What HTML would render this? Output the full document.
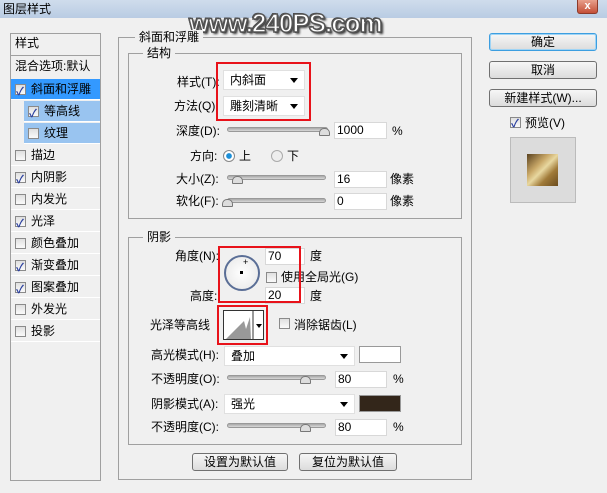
<!DOCTYPE html>
<html><head><meta charset="utf-8"><style>
*{box-sizing:border-box;margin:0;padding:0}
body{width:607px;height:493px;background:#f0f0f0;font-family:"Liberation Sans","Noto Sans CJK SC",sans-serif;font-size:12px;color:#000;position:relative;overflow:hidden}
.a{position:absolute;white-space:nowrap;line-height:14px}
.title{position:absolute;left:0;top:0;width:607px;height:18px;background:linear-gradient(#cfdcec,#b9cce3);}
.close{position:absolute;left:577px;top:0;width:21px;height:14px;background:linear-gradient(#e8a08c,#c44f37);border:1px solid #8c3a2a;border-top:none;border-radius:0 0 3px 3px;color:#fff;font-weight:bold;font-size:11px;text-align:center;line-height:12px}
.box{position:absolute;border:1px solid #a0a0a0}
.leg{position:absolute;background:#f0f0f0;padding:0 4px;line-height:14px}
.row{position:absolute;left:11px;width:89px;height:21px;border-bottom:1px solid #fff;line-height:20px;padding-left:20px;white-space:nowrap;overflow:hidden}
.cb{position:absolute;width:11px;height:11px;border:1px solid #8a8a8a;background:linear-gradient(#e0e0e0,#fafafa)}
.cb.on::after{content:"✓";position:absolute;left:0;top:-3px;font-size:11px;color:#2a3f9e;font-weight:bold}
.inp{position:absolute;background:#fff;border:1px solid #d8d8d8;height:17px;line-height:15px;padding-left:2px}
.dd{position:absolute;background:#fff;border:1px solid #e0e0e0;height:20px;line-height:18px;padding-left:6px}
.dd::after{content:"";position:absolute;right:6px;top:7px;border:4px solid transparent;border-top:5px solid #000}
.sl{position:absolute;height:5px;border-radius:3px;background:linear-gradient(#a8a8a8,#d8d8d8);border:1px solid #999}
.th{position:absolute;width:11px;height:8px;background:#ddd;border:1px solid #777;border-radius:5px 5px 1px 1px}
.btn{position:absolute;border:1px solid #707070;border-radius:3px;background:linear-gradient(#f6f6f6,#dcdcdc);text-align:center;line-height:16px;height:18px}
.red{position:absolute;border:2px solid #e8121a}
</style></head><body>
<div class="title"></div>
<div class="a" style="left:3px;top:2px">图层样式</div>
<div class="close">x</div>
<div class="a" style="left:189px;top:9px;font:bold 26px 'Liberation Sans',sans-serif;letter-spacing:-1px;line-height:28px;color:#fff;-webkit-text-stroke:1.5px #555;text-shadow:1px 1px 0 #444,-1px -1px 0 #444,2px 2px 2px #333">www.240PS.com</div>

<!-- left panel -->
<div class="box" style="left:10px;top:33px;width:91px;height:448px"></div>
<div class="a" style="left:15px;top:36px">样式</div>
<div style="position:absolute;left:11px;top:55px;width:89px;height:1px;background:#a0a0a0"></div>
<div class="a" style="left:15px;top:59px">混合选项:默认</div>
<div class="row" style="top:79px;background:#3399ff"><div class="cb on" style="left:4px;top:5px"></div>斜面和浮雕</div>
<div class="row" style="top:101px;left:24px;width:76px;background:#99c4f0;padding-left:20px"><div class="cb on" style="left:4px;top:5px"></div>等高线</div>
<div class="row" style="top:123px;left:24px;width:76px;background:#99c4f0;padding-left:20px"><div class="cb" style="left:4px;top:5px"></div>纹理</div>
<div class="row" style="top:145px"><div class="cb" style="left:4px;top:5px"></div>描边</div>
<div class="row" style="top:167px"><div class="cb on" style="left:4px;top:5px"></div>内阴影</div>
<div class="row" style="top:189px"><div class="cb" style="left:4px;top:5px"></div>内发光</div>
<div class="row" style="top:211px"><div class="cb on" style="left:4px;top:5px"></div>光泽</div>
<div class="row" style="top:233px"><div class="cb" style="left:4px;top:5px"></div>颜色叠加</div>
<div class="row" style="top:255px"><div class="cb on" style="left:4px;top:5px"></div>渐变叠加</div>
<div class="row" style="top:277px"><div class="cb on" style="left:4px;top:5px"></div>图案叠加</div>
<div class="row" style="top:299px"><div class="cb" style="left:4px;top:5px"></div>外发光</div>
<div class="row" style="top:321px"><div class="cb" style="left:4px;top:5px"></div>投影</div>

<!-- main group -->
<div class="box" style="left:118px;top:37px;width:354px;height:443px"></div>
<div class="leg" style="left:135px;top:30px">斜面和浮雕</div>
<div class="box" style="left:128px;top:53px;width:334px;height:166px"></div>
<div class="leg" style="left:143px;top:46px">结构</div>

<div class="a" style="left:177px;top:75px">样式(T):</div>
<div class="dd" style="left:223px;top:70px;width:82px">内斜面</div>
<div class="a" style="left:174px;top:99px">方法(Q):</div>
<div class="dd" style="left:223px;top:96px;width:82px">雕刻清晰</div>
<div class="red" style="left:216px;top:62px;width:95px;height:59px"></div>

<div class="a" style="left:176px;top:124px">深度(D):</div>
<div class="sl" style="left:227px;top:127px;width:101px"></div><div class="th" style="left:319px;top:128px"></div>
<div class="inp" style="left:334px;top:122px;width:53px">1000</div><div class="a" style="left:392px;top:124px">%</div>
<div class="a" style="left:190px;top:149px">方向:</div>
<div style="position:absolute;left:223px;top:150px;width:12px;height:12px;border-radius:50%;border:1px solid #888;background:radial-gradient(#1c8fd8 35%,#fff 45%)"></div>
<div class="a" style="left:239px;top:149px">上</div>
<div style="position:absolute;left:271px;top:150px;width:12px;height:12px;border-radius:50%;border:1px solid #aaa;background:#eee"></div>
<div class="a" style="left:287px;top:149px">下</div>
<div class="a" style="left:176px;top:172px">大小(Z):</div>
<div class="sl" style="left:227px;top:175px;width:99px"></div><div class="th" style="left:232px;top:176px"></div>
<div class="inp" style="left:334px;top:171px;width:53px">16</div><div class="a" style="left:390px;top:172px">像素</div>
<div class="a" style="left:176px;top:194px">软化(F):</div>
<div class="sl" style="left:227px;top:198px;width:99px"></div><div class="th" style="left:222px;top:199px"></div>
<div class="inp" style="left:334px;top:193px;width:53px">0</div><div class="a" style="left:390px;top:194px">像素</div>

<div class="box" style="left:128px;top:237px;width:334px;height:208px"></div>
<div class="leg" style="left:143px;top:230px">阴影</div>
<div class="a" style="left:175px;top:249px">角度(N):</div>
<div style="position:absolute;left:224px;top:255px;width:36px;height:36px;border-radius:50%;border:2px solid #5a6e96;background:radial-gradient(#fff,#e6e6e6)"></div>
<div style="position:absolute;left:240px;top:271px;width:3px;height:3px;background:#000"></div>
<div class="a" style="left:243px;top:255px;font-size:9px">+</div>
<div class="inp" style="left:265px;top:248px;width:40px">70</div><div class="a" style="left:310px;top:249px">度</div>
<div class="cb" style="left:266px;top:272px"></div><div class="a" style="left:281px;top:270px">使用全局光(G)</div>
<div class="a" style="left:190px;top:289px">高度:</div>
<div class="inp" style="left:265px;top:287px;width:40px">20</div><div class="a" style="left:310px;top:289px">度</div>
<div class="red" style="left:218px;top:246px;width:83px;height:57px"></div>

<div class="a" style="left:150px;top:318px">光泽等高线</div>
<div style="position:absolute;left:223px;top:310px;width:41px;height:30px;border:1px solid #333;background:#fff;overflow:hidden">
<svg width="41" height="30" style="position:absolute;left:0;top:0"><polygon points="1,29 20,10 22,18 26,6 27,29" fill="#999"/><line x1="29" y1="0" x2="29" y2="30" stroke="#333"/><polygon points="32,13 38,13 35,17" fill="#000"/></svg></div>
<div class="red" style="left:217px;top:305px;width:51px;height:40px"></div>
<div class="cb" style="left:279px;top:318px"></div><div class="a" style="left:294px;top:318px">消除锯齿(L)</div>

<div class="a" style="left:151px;top:348px">高光模式(H):</div>
<div class="dd" style="left:224px;top:346px;width:131px">叠加</div>
<div style="position:absolute;left:359px;top:346px;width:42px;height:17px;border:1px solid #999;background:#fff"></div>
<div class="a" style="left:151px;top:372px">不透明度(O):</div>
<div class="sl" style="left:227px;top:375px;width:99px"></div><div class="th" style="left:300px;top:376px"></div>
<div class="inp" style="left:335px;top:371px;width:52px">80</div><div class="a" style="left:393px;top:372px">%</div>
<div class="a" style="left:151px;top:397px">阴影模式(A):</div>
<div class="dd" style="left:224px;top:394px;width:131px">强光</div>
<div style="position:absolute;left:359px;top:395px;width:42px;height:17px;border:1px solid #999;background:#33261a"></div>
<div class="a" style="left:151px;top:420px">不透明度(C):</div>
<div class="sl" style="left:227px;top:423px;width:99px"></div><div class="th" style="left:300px;top:424px"></div>
<div class="inp" style="left:335px;top:419px;width:52px">80</div><div class="a" style="left:393px;top:420px">%</div>

<div class="btn" style="left:192px;top:453px;width:96px">设置为默认值</div>
<div class="btn" style="left:299px;top:453px;width:98px">复位为默认值</div>

<!-- right -->
<div class="btn" style="left:489px;top:33px;width:108px;border-color:#3c9ee0;box-shadow:0 0 0 1px #9fd4f5 inset">确定</div>
<div class="btn" style="left:489px;top:61px;width:108px">取消</div>
<div class="btn" style="left:489px;top:89px;width:108px">新建样式(W)...</div>
<div class="cb on" style="left:510px;top:117px"></div><div class="a" style="left:525px;top:116px">预览(V)</div>
<div style="position:absolute;left:510px;top:137px;width:66px;height:66px;border:1px solid #bbb;background:#dcdcdc"></div>
<div style="position:absolute;left:527px;top:154px;width:31px;height:32px;background:linear-gradient(135deg,#5a4220 0%,#c9a868 35%,#e8d7a0 50%,#a07a38 70%,#6b4c1e 100%)"></div>
</body></html>
